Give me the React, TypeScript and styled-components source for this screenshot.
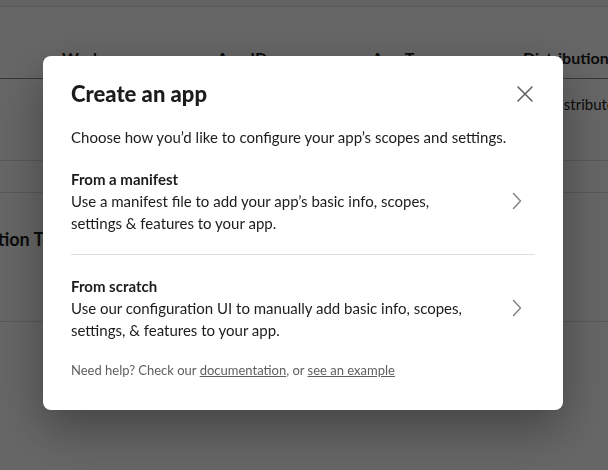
import React from "react";
import styled, { createGlobalStyle } from "styled-components";

const Global = createGlobalStyle`
  html, body { margin: 0; padding: 0; background: #ffffff; }
  body { font-family: Lato, "Noto Sans", sans-serif; color: #1d1c1d; width: 608px; height: 470px; overflow: hidden; }
  * { box-sizing: border-box; }
`;

const Page = styled.div`
  width: 608px;
  height: 470px;
  overflow: hidden;
  background: #ffffff;
`;

const TopStrip = styled.div`
  height: 7px;
  background: #f4f4f4;
  border-bottom: 1px solid #dddddd;
`;

const TableRow = styled.div<{ $head?: boolean }>`
  display: grid;
  grid-template-columns: 62px 155px 155px 151px 1fr;
  height: ${(p) => (p.$head ? "72px" : "82px")};
  align-items: ${(p) => (p.$head ? "end" : "start")};
  padding: ${(p) => (p.$head ? "0 0 10px 0" : "15px 0 0 0")};
  border-bottom: 1px solid ${(p) => (p.$head ? "#8a8a8a" : "#dddddd")};
`;

const Cell = styled.div<{ $head?: boolean }>`
  font-size: ${(p) => (p.$head ? "16px" : "15px")};
  font-weight: ${(p) => (p.$head ? 700 : 400)};
  line-height: 20px;
  white-space: nowrap;
`;

const Spacer = styled.div`
  height: 32px;
  border-bottom: 1px solid #dddddd;
`;

const Section = styled.div`
  height: 129px;
  padding-top: 36px;
  border-bottom: 1px solid #dddddd;
`;

const SectionTitle = styled.h2`
  margin: 0 0 0 -158px;
  font-size: 18px;
  font-weight: 700;
  line-height: 20px;
  white-space: nowrap;
`;

const Overlay = styled.div`
  position: fixed;
  inset: 0;
  background: rgba(0, 0, 0, 0.6);
  display: flex;
  align-items: flex-start;
  padding: 56px 0 0 43px;
`;

const Modal = styled.div`
  width: 520px;
  background: #ffffff;
  border-radius: 8px;
  box-shadow: 0 18px 48px rgba(0, 0, 0, 0.35);
  padding: 20px 20px 31px 28px;
`;

const Header = styled.div`
  display: flex;
  align-items: center;
  justify-content: space-between;
`;

const Title = styled.h1`
  margin: 0;
  font-size: 22px;
  font-weight: 900;
  line-height: 36px;
  color: #1d1c1d;
`;

const CloseButton = styled.button`
  width: 36px;
  height: 36px;
  border: none;
  background: transparent;
  padding: 0;
  display: flex;
  align-items: center;
  justify-content: center;
  color: #5e5d60;
`;

const Body = styled.div`
  padding-right: 8px;
`;

const Lead = styled.p`
  margin: 14px 0 0 0;
  font-size: 15px;
  line-height: 22px;
`;

const Option = styled.div`
  display: flex;
  align-items: center;
  padding: 20px 0;
`;

const OptionText = styled.div`
  width: 404px;
  flex: 0 0 404px;
`;

const OptionTitle = styled.div`
  font-size: 15px;
  font-weight: 700;
  line-height: 22px;
`;

const OptionDesc = styled.div`
  font-size: 15px;
  line-height: 22px;
`;

const ChevronBox = styled.div`
  margin-left: auto;
  margin-right: 6px;
  width: 24px;
  height: 24px;
  color: #868686;
  display: flex;
`;

const Divider = styled.hr`
  margin: 0;
  border: none;
  border-top: 1px solid #dddddd;
`;

const Footer = styled.p`
  margin: 0;
  font-size: 13px;
  line-height: 18px;
  color: #616061;
`;

const FooterLink = styled.a`
  color: #616061;
  text-decoration: underline;
`;

const Chevron = () => (
  <ChevronBox>
    <svg width="24" height="24" viewBox="0 0 24 24" fill="none">
      <path d="M8.5 4.5 L15.5 12 L8.5 19.5" stroke="currentColor" strokeWidth="1.5" strokeLinecap="round" strokeLinejoin="round" />
    </svg>
  </ChevronBox>
);

export default function App() {
  return (
    <>
      <Global />
      <Page>
        <TopStrip />
        <TableRow $head>
          <Cell $head />
          <Cell $head>Workspace</Cell>
          <Cell $head>App ID</Cell>
          <Cell $head>App Type</Cell>
          <Cell $head>Distribution</Cell>
        </TableRow>
        <TableRow>
          <Cell />
          <Cell>Acme</Cell>
          <Cell>A01234567</Cell>
          <Cell>Custom</Cell>
          <Cell>Not distributed</Cell>
        </TableRow>
        <Spacer />
        <Section>
          <SectionTitle>Your App Configuration Tokens</SectionTitle>
        </Section>
      </Page>
      <Overlay>
        <Modal role="dialog" aria-label="Create an app">
          <Header>
            <Title>Create an app</Title>
            <CloseButton aria-label="Close">
              <svg width="24" height="24" viewBox="0 0 24 24" fill="none">
                <path d="M5 5 L19 19 M19 5 L5 19" stroke="currentColor" strokeWidth="1.5" strokeLinecap="round" />
              </svg>
            </CloseButton>
          </Header>
          <Body>
            <Lead>Choose how you’d like to configure your app’s scopes and settings.</Lead>
            <Option>
              <OptionText>
                <OptionTitle>From a manifest</OptionTitle>
                <OptionDesc>Use a manifest file to add your app’s basic info, scopes, settings &amp; features to your app.</OptionDesc>
              </OptionText>
              <Chevron />
            </Option>
            <Divider />
            <Option>
              <OptionText>
                <OptionTitle>From scratch</OptionTitle>
                <OptionDesc>Use our configuration UI to manually add basic info, scopes, settings, &amp; features to your app.</OptionDesc>
              </OptionText>
              <Chevron />
            </Option>
            <Footer>
              Need help? Check our <FooterLink href="#">documentation</FooterLink>, or{" "}
              <FooterLink href="#">see an example</FooterLink>
            </Footer>
          </Body>
        </Modal>
      </Overlay>
    </>
  );
}
